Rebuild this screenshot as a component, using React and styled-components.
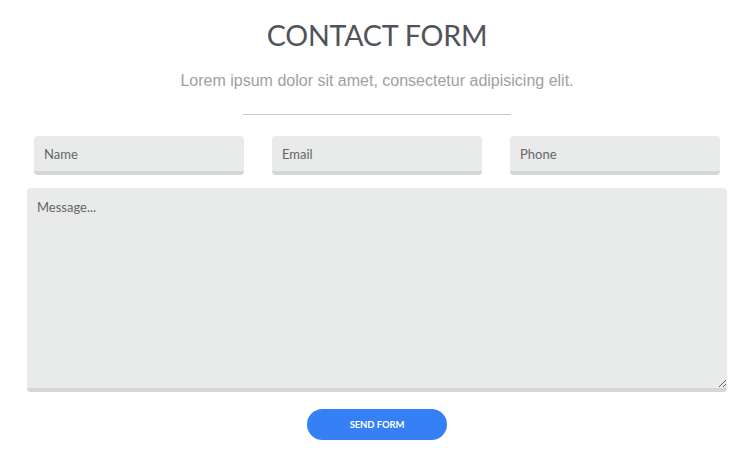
import React from "react";
import styled, { createGlobalStyle } from "styled-components";

const Global = createGlobalStyle`
  html, body { margin: 0; padding: 0; background: #fff; }
  body { font-family: Lato, "Open Sans", sans-serif; }
  * { box-sizing: border-box; }
`;

const Page = styled.div`
  width: 754px;
  display: flex;
  flex-direction: column;
  align-items: center;
  padding-top: 17px;
`;

const Title = styled.h1`
  margin: 0;
  font-family: Lato, sans-serif;
  font-weight: 400;
  font-size: 28.6px;
  line-height: 36px;
  color: #505359;
  letter-spacing: -0.2px;
`;

const Subtitle = styled.p`
  margin: 18px 0 0;
  font-family: "Liberation Sans", Arial, sans-serif;
  font-weight: 300;
  font-size: 16px;
  line-height: 20px;
  color: #a0a0a0;
`;

const Divider = styled.hr`
  width: 268px;
  margin: 23px 0 0;
  border: 0;
  border-top: 1px solid #c8c8c8;
`;

const Form = styled.form`
  width: 700px;
  margin-top: 21px;
  display: flex;
  flex-direction: column;
  align-items: center;
`;

const Row = styled.div`
  width: 100%;
  padding: 0 7px;
  display: grid;
  grid-template-columns: repeat(3, 210px);
  column-gap: 28px;
`;

const Field = styled.input`
  height: 39px;
  width: 100%;
  border: 0;
  border-bottom: 4px solid #d5d6d6;
  border-radius: 4px;
  background: #e9eaea;
  padding: 0 10px;
  font-family: Lato, sans-serif;
  font-size: 13px;
  color: #555;
  outline: none;
  &::placeholder { color: #666; }
`;

const Message = styled.textarea`
  margin-top: 13px;
  width: 700px;
  height: 204px;
  border: 0;
  border-bottom: 4px solid #d5d6d6;
  border-radius: 4px;
  background: #e9eaea;
  padding: 11px 10px;
  font-family: Lato, sans-serif;
  font-size: 13px;
  color: #555;
  outline: none;
  resize: vertical;
  display: block;
  &::placeholder { color: #666; }
`;

const Button = styled.button`
  margin-top: 17px;
  width: 140px;
  height: 31px;
  border: 0;
  border-radius: 16px;
  background: #3680f6;
  color: #fff;
  font-family: Lato, sans-serif;
  font-weight: 700;
  font-size: 9.5px;
  letter-spacing: -0.1px;
  cursor: pointer;
`;

export default function App() {
  return (
    <>
      <Global />
      <Page>
        <Title>CONTACT FORM</Title>
        <Subtitle>Lorem ipsum dolor sit amet, consectetur adipisicing elit.</Subtitle>
        <Divider />
        <Form onSubmit={(e) => e.preventDefault()}>
          <Row>
            <Field placeholder="Name" />
            <Field placeholder="Email" />
            <Field placeholder="Phone" />
          </Row>
          <Message placeholder="Message..." />
          <Button type="submit">SEND FORM</Button>
        </Form>
      </Page>
    </>
  );
}
